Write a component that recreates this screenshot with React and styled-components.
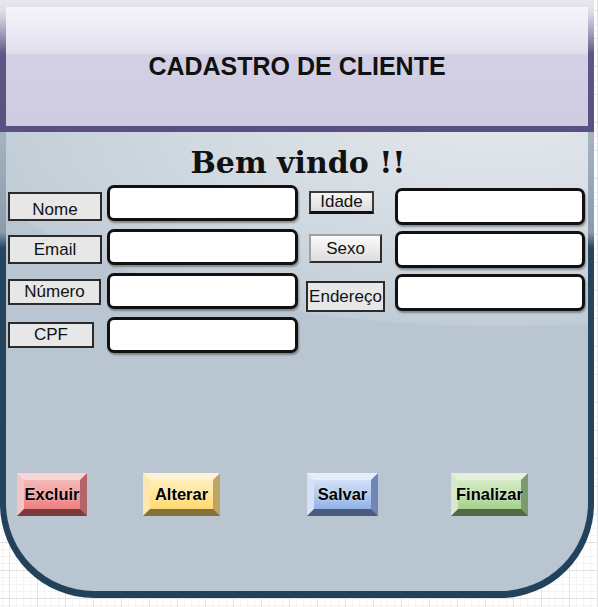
import React from "react";
import styled, { createGlobalStyle, css } from "styled-components";

const Global = createGlobalStyle`
  html, body { margin: 0; padding: 0; }
  body {
    min-height: 607px;
    font-family: "Liberation Sans", Arial, sans-serif;
    background-color: #fff;
    background-image:
      linear-gradient(#e3e3e3 1px, transparent 1px),
      linear-gradient(90deg, #e3e3e3 1px, transparent 1px),
      linear-gradient(#f4f4f4 1px, transparent 1px),
      linear-gradient(90deg, #f4f4f4 1px, transparent 1px);
    background-size: 28px 28px, 28px 28px, 7px 7px, 7px 7px;
    background-position: 9px 10px;
  }
`;

const Frame = styled.div`
  width: 594px;
`;

const Header = styled.header`
  height: 132px;
  box-sizing: border-box;
  padding: 7px 6px 6px;
  background: linear-gradient(to bottom, #e9e8ee 0px, #dedce6 12px, #a7a1c2 32px, #5e5786 54px, #575080 100%);
`;

const HeaderGlass = styled.div`
  height: 100%;
  display: flex;
  align-items: center;
  justify-content: center;
  background: linear-gradient(to bottom, #f5f4fa 0px, #ebe9f3 26px, #e0deeb 46px, #d3d0e5 48px, #cfcce2 100%);
`;

const HeaderTitle = styled.h1`
  margin: 0;
  font: bold 25px "Liberation Sans", Arial, sans-serif;
  color: #111;
`;

const Panel = styled.section`
  height: 466px;
  box-sizing: border-box;
  padding: 0 6px 7px;
  border-radius: 0 0 94px 94px;
  background: linear-gradient(to bottom, #a6b4c0 0px, #8b9bab 100px, #25455f 116px, #22425c 100%);
`;

const Inner = styled.div`
  height: 100%;
  box-sizing: border-box;
  padding: 11px 0 0 2px;
  border-radius: 0 0 88px 88px;
  display: flex;
  flex-direction: column;
  background:
    radial-gradient(ellipse 92% 195px at 85% 0, #e1e6eb 0%, #d2dae1 55%, #c0ccd6 99%, rgba(192, 204, 214, 0) 100%),
    #b9c6d1;
`;

const Welcome = styled.h2`
  margin: 0;
  text-align: center;
  font: bold 30px/40px "DejaVu Serif", "Liberation Serif", serif;
  color: #111;
`;

const Form = styled.div`
  display: flex;
  align-items: flex-start;
  gap: 8px;
`;

const Column = styled.div`
  display: flex;
  flex-direction: column;
  gap: ${p => p.$gap}px;
  margin-top: ${p => p.$top}px;
`;

const Row = styled.div`
  display: grid;
  grid-template-columns: ${p => p.$label}px ${p => p.$field}px;
  column-gap: ${p => p.$gap}px;
  align-items: start;
`;

const tagLooks = {
  flat: css`
    border: 2px solid #2b2b2b;
    background: #e7e7e7;
  `,
  raised: css`
    border: 2px solid #3c3c3c;
    border-bottom: 3px solid #111;
    background: linear-gradient(to bottom, #f6f6f6, #dcdcdc);
  `,
  outset: css`
    border: 2px solid;
    border-color: #a0a0a0 #2c2c2c #2c2c2c #a0a0a0;
    background: linear-gradient(to bottom, #fbfbfb, #dddddd);
  `,
};

const Tag = styled.div`
  box-sizing: border-box;
  width: ${p => p.$w}px;
  height: ${p => p.$h}px;
  margin-top: ${p => p.$mt}px;
  margin-left: ${p => p.$ml || 0}px;
  padding-top: ${p => p.$pt || 0}px;
  display: flex;
  align-items: center;
  justify-content: center;
  font-size: 17px;
  color: #111;
  white-space: nowrap;
  ${p => tagLooks[p.$look || "flat"]}
`;

const Field = styled.input`
  box-sizing: border-box;
  width: 100%;
  height: ${p => p.$h}px;
  margin: 0;
  border: 3px solid #111;
  border-radius: 7px;
  background: #fff;
  box-shadow: 1px 2px 2px rgba(0, 0, 0, 0.35);
  outline: none;
`;

const Actions = styled.div`
  display: flex;
  margin-top: 120px;
  padding-left: 9px;
`;

const Bevel = styled.button`
  box-sizing: border-box;
  width: ${p => p.$w}px;
  height: 43px;
  margin: 0 0 0 ${p => p.$ml}px;
  padding: 0;
  border: 7px solid;
  border-color: ${p => `${p.$c.top} ${p.$c.right} ${p.$c.bottom} ${p.$c.left}`};
  background: linear-gradient(to bottom, ${p => p.$c.faceTop}, ${p => p.$c.faceBottom});
  display: flex;
  align-items: center;
  justify-content: center;
  white-space: nowrap;
  font: bold 16.5px "Liberation Sans", Arial, sans-serif;
  color: #000;
  text-shadow: 0 0 2px rgba(255, 255, 255, 0.7);
  cursor: pointer;
`;

const palette = {
  red: { top: "#f9d6d6", left: "#f5c4c4", right: "#b46464", bottom: "#7a3b3b", faceTop: "#f6b8b8", faceBottom: "#ee7f7f" },
  yellow: { top: "#fff3d6", left: "#fde7b0", right: "#bea465", bottom: "#84703a", faceTop: "#ffefbc", faceBottom: "#ffda70" },
  blue: { top: "#e6eefb", left: "#d4e1f6", right: "#6f87b1", bottom: "#4a5b7b", faceTop: "#d2e1f8", faceBottom: "#91b3e8" },
  green: { top: "#e5f1dd", left: "#d6eacb", right: "#7c9a6b", bottom: "#536945", faceTop: "#d6ecc8", faceBottom: "#a5d28b" },
};

const left = [
  { label: "Nome", w: 94, h: 29, mt: 7, pt: 7 },
  { label: "Email", w: 94, h: 29, mt: 6 },
  { label: "Número", w: 93, h: 26, mt: 6 },
  { label: "CPF", w: 86, h: 26, mt: 5 },
];

const right = [
  { label: "Idade", w: 65, h: 23, mt: 3, ml: 3, look: "raised" },
  { label: "Sexo", w: 73, h: 29, mt: 3, ml: 3, look: "outset" },
  { label: "Endereço", w: 79, h: 31, mt: 7 },
];

const buttons = [
  { text: "Excluir", w: 70, ml: 0, c: palette.red },
  { text: "Alterar", w: 77, ml: 56, c: palette.yellow },
  { text: "Salvar", w: 71, ml: 87, c: palette.blue },
  { text: "Finalizar", w: 77, ml: 73, c: palette.green },
];

export default function App() {
  return (
    <Frame>
      <Global />
      <Header>
        <HeaderGlass>
          <HeaderTitle>CADASTRO DE CLIENTE</HeaderTitle>
        </HeaderGlass>
      </Header>
      <Panel>
        <Inner>
          <Welcome>Bem vindo !!</Welcome>
          <Form>
            <Column $gap={8} $top={2}>
              {left.map(r => (
                <Row key={r.label} $label={94} $field={191} $gap={5}>
                  <Tag $w={r.w} $h={r.h} $mt={r.mt} $pt={r.pt}>{r.label}</Tag>
                  <Field $h={36} />
                </Row>
              ))}
            </Column>
            <Column $gap={6} $top={5}>
              {right.map(r => (
                <Row key={r.label} $label={85} $field={190} $gap={4}>
                  <Tag $w={r.w} $h={r.h} $mt={r.mt} $ml={r.ml} $look={r.look}>{r.label}</Tag>
                  <Field $h={37} />
                </Row>
              ))}
            </Column>
          </Form>
          <Actions>
            {buttons.map(b => (
              <Bevel key={b.text} $w={b.w} $ml={b.ml} $c={b.c}>{b.text}</Bevel>
            ))}
          </Actions>
        </Inner>
      </Panel>
    </Frame>
  );
}
